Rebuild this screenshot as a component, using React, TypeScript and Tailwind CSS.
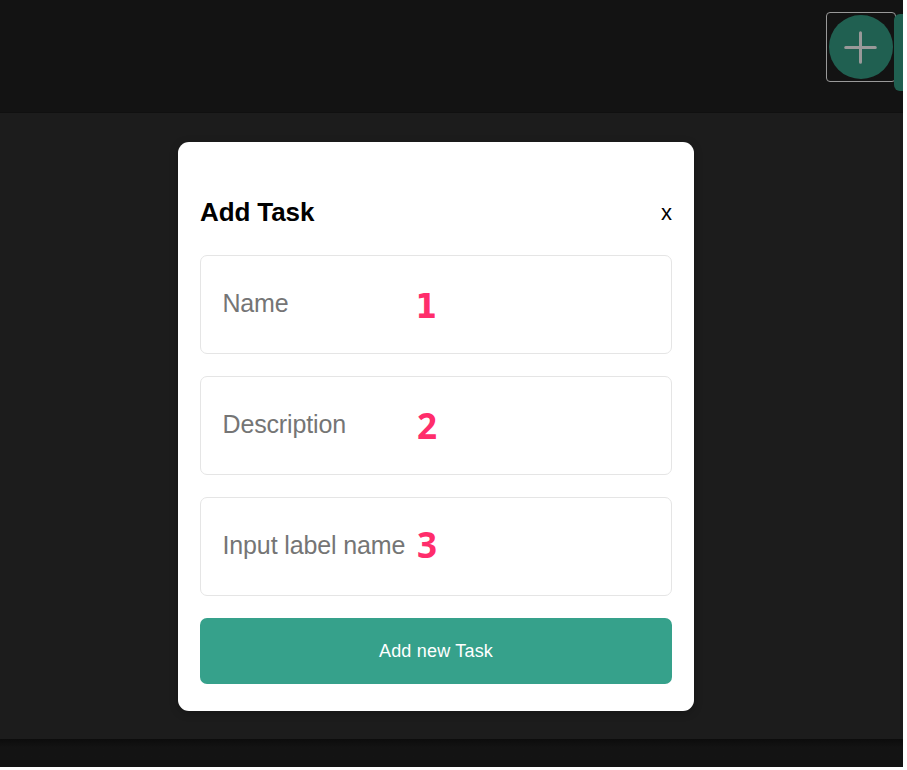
import React from "react";

type FieldProps = {
  label: string;
  step: string;
  labelClass: string;
  stepClass: string;
};

function Field({ label, step, labelClass, stepClass }: FieldProps) {
  return (
    <div className="relative h-[99px]">
      <input
        placeholder={label}
        className={`block h-full w-full rounded-[7px] border border-[#e5e5e5] bg-white px-[21.5px] pb-[2px] text-[25px] text-black outline-none placeholder:text-[#757575] ${labelClass}`}
      />
      <span className={`absolute leading-[40px] text-[#ff2d6b] ${stepClass}`}>
        {step}
      </span>
    </div>
  );
}

export default function App() {
  return (
    <div className="h-[770px] w-[907px] overflow-hidden bg-white font-['Liberation_Sans',Arial,sans-serif]">
      <div className="flex h-[767px] w-[903px] flex-col overflow-hidden bg-[#131313]">
        <header className="flex h-[113px] shrink-0 justify-end overflow-hidden border-b border-[#101010] pt-3">
          <button
            aria-label="Add"
            className="flex h-[70px] w-[70px] shrink-0 items-start justify-start rounded-[4px] border border-[#999999] pt-[2px] pl-[2px]"
          >
            <span className="flex h-[64px] w-[64px] items-start justify-start rounded-full bg-[#206051] pt-[16px] pl-[15px]">
              <svg width="33" height="33" viewBox="0 0 33 33" stroke="#999999" strokeWidth="3" strokeLinecap="round">
                <path d="M16.5 1.7v29.6M1.7 16.5h29.6" />
              </svg>
            </span>
          </button>
          <div className="-ml-[2px] mt-[2px] h-[77px] w-[9px] shrink-0 rounded-l-[6px] bg-[#206051]" />
        </header>
        <main className="flex h-[626px] shrink-0 bg-[#1c1c1c] pt-[29px] pl-[178px]">
          <section className="flex h-[569px] w-[516px] flex-col rounded-[11px] bg-white px-[22px] pt-[53px] shadow-[0_2px_8px_rgba(0,0,0,0.25)]">
            <div className="flex h-[34px] items-center justify-between">
              <h2 className="text-[26px] font-bold tracking-[-0.1px] text-black">Add Task</h2>
              <button className="text-[22px] text-black">x</button>
            </div>
            <form className="mt-[26px] flex flex-col gap-[22px]">
              <Field
                label="Name"
                step="1"
                labelClass="tracking-[-0.2px]"
                stepClass="top-[31px] left-[215.5px] font-['DejaVu_Sans_Condensed','DejaVu_Sans',sans-serif] font-stretch-condensed text-[34px] font-bold"
              />
              <Field
                label="Description"
                step="2"
                labelClass="tracking-[-0.15px]"
                stepClass="top-[30px] left-[217px] font-['Open_Sans','Noto_Sans',sans-serif] text-[35px] font-bold"
              />
              <Field
                label="Input label name"
                step="3"
                labelClass="tracking-[-0.13px]"
                stepClass="top-[28px] left-[217px] font-['Open_Sans','Noto_Sans',sans-serif] text-[35px] font-bold"
              />
              <button
                type="button"
                className="h-[66px] rounded-[7px] bg-[#36a18b] text-[18px] tracking-[0.2px] text-white"
              >
                Add new Task
              </button>
            </form>
          </section>
        </main>
        <footer className="h-[28px] shrink-0 bg-gradient-to-b from-[#0c0c0c] to-[#131313] to-30%" />
      </div>
    </div>
  );
}
